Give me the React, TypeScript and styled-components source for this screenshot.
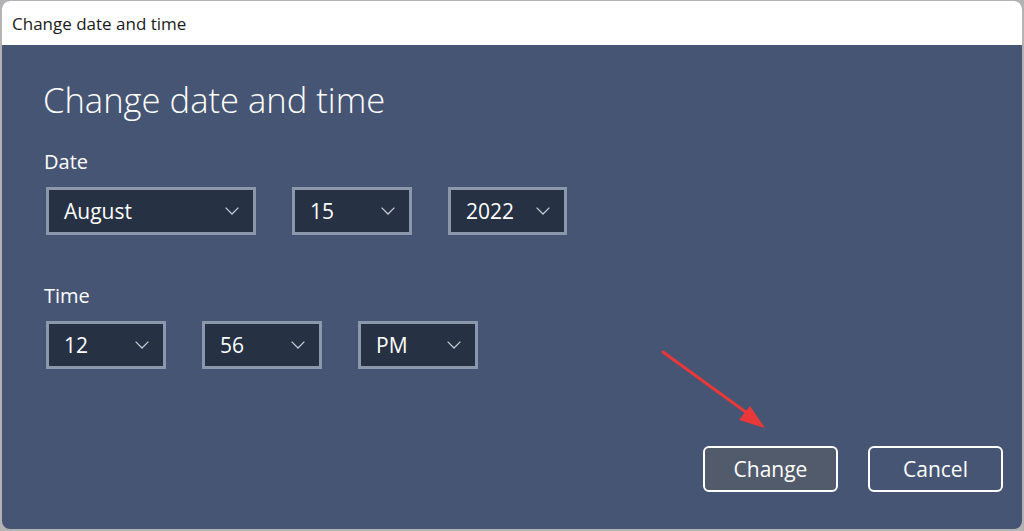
import React from "react";
import styled, { createGlobalStyle } from "styled-components";

const Global = createGlobalStyle`
  html, body { margin: 0; padding: 0; }
  body {
    background: #b3b3b3;
    font-family: "Open Sans", "Noto Sans", "Liberation Sans", sans-serif;
    width: 1024px;
    height: 531px;
    overflow: hidden;
  }
`;

const Page = styled.div`
  width: 1024px;
  height: 531px;
  padding: 1px 2px 2px 2px;
  box-sizing: border-box;
`;

const Window = styled.div`
  position: relative;
  width: 1020px;
  height: 528px;
  border-radius: 8px;
  overflow: hidden;
  display: flex;
  flex-direction: column;
  background: #455573;
`;

const TitleBar = styled.div`
  height: 44px;
  flex: none;
  background: #ffffff;
  display: flex;
  align-items: center;
  padding-left: 10px;
  font-size: 17px;
  color: #1a1a1a;
`;

const Body = styled.div`
  flex: 1;
  display: flex;
  flex-direction: column;
  padding: 0 19px 37px 40px;
`;

const Heading = styled.h1`
  margin: 35px 0 0 1px;
  font-size: 34.6px;
  line-height: 40px;
  font-weight: 300;
  color: #ffffff;
`;

const Label = styled.div<{ $top: number }>`
  margin-top: ${(p) => p.$top}px;
  margin-left: 2px;
  font-size: 20px;
  line-height: 24px;
  color: #ffffff;
`;

const Row = styled.div`
  display: flex;
  gap: 36px;
  margin-top: 13px;
  margin-left: 4px;
`;

const Select = styled.div<{ $w: number }>`
  width: ${(p) => p.$w}px;
  height: 48px;
  box-sizing: border-box;
  border: 3px solid #8b97aa;
  background: #263143;
  display: flex;
  align-items: center;
  justify-content: space-between;
  padding: 0 14px 0 15px;
  font-size: 21px;
  color: #ffffff;
`;

const Chevron = () => (
  <svg width="14" height="8" viewBox="0 0 14 8">
    <path d="M0.6 0.6 L7 7 L13.4 0.6" fill="none" stroke="#c3c9d2" strokeWidth="1.3" />
  </svg>
);

const Footer = styled.div`
  margin-top: auto;
  display: flex;
  justify-content: flex-end;
  gap: 30px;
`;

const Button = styled.div<{ $primary?: boolean }>`
  width: 135px;
  height: 46px;
  box-sizing: border-box;
  border: 2px solid #ffffff;
  border-radius: 6px;
  background: ${(p) => (p.$primary ? "#525b6b" : "transparent")};
  color: #ffffff;
  font-size: 21px;
  display: flex;
  align-items: center;
  justify-content: center;
`;

const Arrow = styled.svg`
  position: absolute;
  left: 0;
  top: 0;
  pointer-events: none;
`;

function Dropdown({ value, width }: { value: string; width: number }) {
  return (
    <Select $w={width}>
      <span>{value}</span>
      <Chevron />
    </Select>
  );
}

export default function App() {
  return (
    <>
      <Global />
      <Page>
        <Window>
          <TitleBar>Change date and time</TitleBar>
          <Body>
            <Heading>Change date and time</Heading>
            <Label $top={30}>Date</Label>
            <Row>
              <Dropdown value="August" width={210} />
              <Dropdown value="15" width={120} />
              <Dropdown value="2022" width={119} />
            </Row>
            <Label $top={49}>Time</Label>
            <Row>
              <Dropdown value="12" width={120} />
              <Dropdown value="56" width={120} />
              <Dropdown value="PM" width={120} />
            </Row>
            <Footer>
              <Button $primary>Change</Button>
              <Button>Cancel</Button>
            </Footer>
          </Body>
          <Arrow width="1020" height="528" viewBox="0 0 1020 528">
            <line x1="661" y1="351" x2="752" y2="417" stroke="#e8383a" strokeWidth="3" strokeLinecap="round" />
            <polygon points="763,427 737,419 748,405" fill="#e8383a" />
          </Arrow>
        </Window>
      </Page>
    </>
  );
}
